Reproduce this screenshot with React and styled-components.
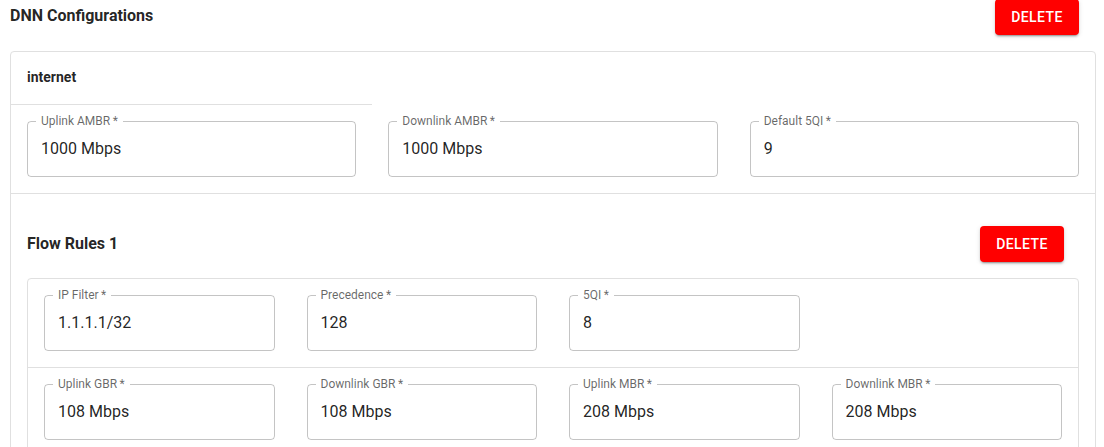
import styled, { createGlobalStyle } from "styled-components";

const GlobalStyle = createGlobalStyle`
  body {
    margin: 0;
    background: #fff;
    font-family: Roboto, "Liberation Sans", sans-serif;
    color: rgba(0, 0, 0, 0.87);
  }
`;

const dnnFields = [
  { id: "ul", label: "Uplink AMBR", value: "1000 Mbps" },
  { id: "dl", label: "Downlink AMBR", value: "1000 Mbps" },
  { id: "5qi", label: "Default 5QI", value: "9" },
];

const flowRows = [
  [
    { id: "ip", label: "IP Filter", value: "1.1.1.1/32" },
    { id: "prec", label: "Precedence", value: "128" },
    { id: "5qi", label: "5QI", value: "8" },
  ],
  [
    { id: "ugbr", label: "Uplink GBR", value: "108 Mbps" },
    { id: "dgbr", label: "Downlink GBR", value: "108 Mbps" },
    { id: "umbr", label: "Uplink MBR", value: "208 Mbps" },
    { id: "dmbr", label: "Downlink MBR", value: "208 Mbps" },
  ],
];

const Field = ({ label, value }) => (
  <FieldBox>
    <FieldLabel>{label}{"\u2009*"}</FieldLabel>
    <FieldValue>{value}</FieldValue>
  </FieldBox>
);

const App = () => {
  return (
    <Page>
      <GlobalStyle />
      <TitleRow>
        <Title>DNN Configurations</Title>
        <DeleteButton>Delete</DeleteButton>
      </TitleRow>

      <Card>
        <CardHeader>internet</CardHeader>
        <FieldRow cols={3}>
          {dnnFields.map((f) => (
            <Field key={f.id} {...f} />
          ))}
        </FieldRow>

        <FlowSection>
          <FlowHeader>
            <FlowTitle>Flow Rules 1</FlowTitle>
            <DeleteButton>Delete</DeleteButton>
          </FlowHeader>
          <InnerCard>
            {flowRows.map((row, i) => (
              <FieldRow key={i} cols={4} divided={i > 0}>
                {row.map((f) => (
                  <Field key={f.id} {...f} />
                ))}
              </FieldRow>
            ))}
          </InnerCard>
        </FlowSection>
      </Card>
    </Page>
  );
};

export default App;

const Page = styled.div`
  padding: 0 8px 40px 10px;
`;

const TitleRow = styled.div`
  display: flex;
  justify-content: space-between;
  align-items: flex-start;
  margin-top: -1px;
  padding-right: 17px;
`;

const Title = styled.h6`
  margin: 5px 0 0;
  font-size: 16px;
  font-weight: 700;
  line-height: 24px;
`;

const DeleteButton = styled.button`
  height: 36px;
  min-width: 84px;
  padding: 6px 16px;
  border: none;
  border-radius: 4px;
  background: #ff0000;
  color: #fff;
  font-family: Roboto, "Liberation Sans", sans-serif;
  font-size: 14px;
  font-weight: 500;
  letter-spacing: 0.4px;
  text-transform: uppercase;
  box-shadow: 0px 3px 1px -2px rgba(0, 0, 0, 0.2),
    0px 2px 2px 0px rgba(0, 0, 0, 0.14), 0px 1px 5px 0px rgba(0, 0, 0, 0.12);
  cursor: pointer;
`;

const Card = styled.div`
  margin-top: 16px;
  border: 1px solid #e0e0e0;
  border-radius: 4px;
`;

const CardHeader = styled.div`
  width: 33.33%;
  box-sizing: border-box;
  padding: 15px 16px 16px;
  border-bottom: 1px solid #e0e0e0;
  font-size: 14px;
  font-weight: 700;
  line-height: 21px;
`;

const FieldRow = styled.div`
  display: grid;
  grid-template-columns: repeat(${({ cols }) => cols}, 1fr);
  column-gap: 32px;
  padding: 16px;
  border-top: ${({ divided }) => (divided ? "1px solid #e0e0e0" : "none")};
`;

const FieldBox = styled.div`
  position: relative;
  height: 56px;
  box-sizing: border-box;
  border: 1px solid rgba(0, 0, 0, 0.23);
  border-radius: 4px;
  display: flex;
  align-items: center;
  padding: 0 13px 1px;
`;

const FieldLabel = styled.label`
  position: absolute;
  top: -8px;
  left: 8px;
  padding: 0 5px;
  background: #fff;
  font-size: 12px;
  line-height: 14px;
  color: rgba(0, 0, 0, 0.6);
  white-space: nowrap;
`;

const FieldValue = styled.span`
  font-size: 16px;
  line-height: 23px;
  color: rgba(0, 0, 0, 0.87);
`;

const FlowSection = styled.div`
  border-top: 1px solid #e0e0e0;
  padding: 32px 16px 16px;
`;

const FlowHeader = styled.div`
  display: flex;
  justify-content: space-between;
  align-items: center;
  padding-right: 15px;
  margin-bottom: 16px;
`;

const FlowTitle = styled.h6`
  margin: 0;
  font-size: 16px;
  font-weight: 700;
  line-height: 24px;
`;

const InnerCard = styled.div`
  border: 1px solid #e0e0e0;
  border-radius: 4px;
`;
